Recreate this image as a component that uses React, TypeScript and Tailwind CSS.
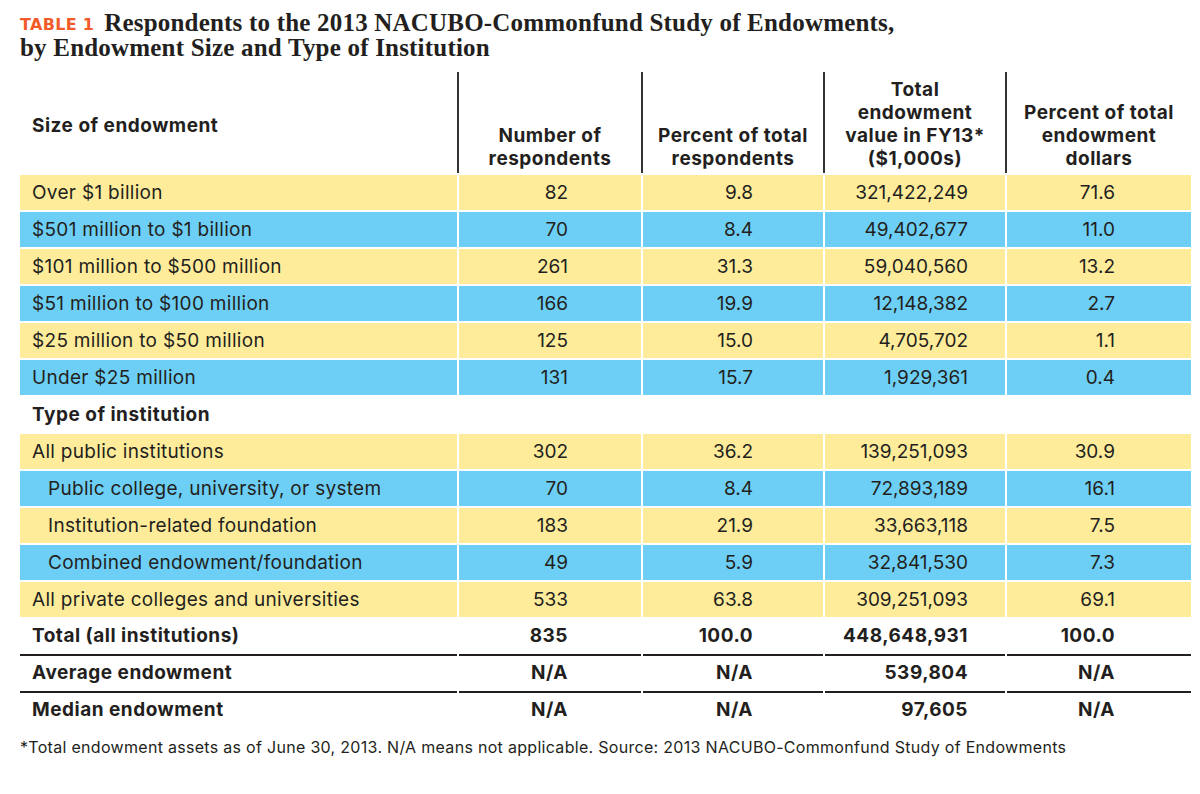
const rows = [
  { label: "Over $1 billion", n: "82", pct: "9.8", total: "321,422,249", dollars: "71.6", tone: "yellow" },
  { label: "$501 million to $1 billion", n: "70", pct: "8.4", total: "49,402,677", dollars: "11.0", tone: "blue" },
  { label: "$101 million to $500 million", n: "261", pct: "31.3", total: "59,040,560", dollars: "13.2", tone: "yellow" },
  { label: "$51 million to $100 million", n: "166", pct: "19.9", total: "12,148,382", dollars: "2.7", tone: "blue" },
  { label: "$25 million to $50 million", n: "125", pct: "15.0", total: "4,705,702", dollars: "1.1", tone: "yellow" },
  { label: "Under $25 million", n: "131", pct: "15.7", total: "1,929,361", dollars: "0.4", tone: "blue" },
];

const institutions = [
  { label: "All public institutions", n: "302", pct: "36.2", total: "139,251,093", dollars: "30.9", tone: "yellow", indent: false },
  { label: "Public college, university, or system", n: "70", pct: "8.4", total: "72,893,189", dollars: "16.1", tone: "blue", indent: true },
  { label: "Institution-related foundation", n: "183", pct: "21.9", total: "33,663,118", dollars: "7.5", tone: "yellow", indent: true },
  { label: "Combined endowment/foundation", n: "49", pct: "5.9", total: "32,841,530", dollars: "7.3", tone: "blue", indent: true },
  { label: "All private colleges and universities", n: "533", pct: "63.8", total: "309,251,093", dollars: "69.1", tone: "yellow", indent: false },
];

const summary = [
  { label: "Total (all institutions)", n: "835", pct: "100.0", total: "448,648,931", dollars: "100.0", line: true },
  { label: "Average endowment", n: "N/A", pct: "N/A", total: "539,804", dollars: "N/A", line: true },
  { label: "Median endowment", n: "N/A", pct: "N/A", total: "97,605", dollars: "N/A", line: false },
];

const grid = "grid grid-cols-[437px_182px_180px_180px_184px] gap-x-[2px]";

function DataRow({ r, indent }: { r: any; indent?: boolean }) {
  const bg = r.tone === "yellow" ? "bg-[#feec9b]" : "bg-[#6dcff6]";
  const cell = `${bg} h-[35px] flex items-center pt-[2px]`;
  return (
    <div className={`${grid} mb-[2px]`}>
      <div className={`${cell} tracking-[0.3px] ${indent ? "pl-[28px]" : "pl-3"}`}>{r.label}</div>
      <div className={`${cell} justify-end pr-[73px]`}>{r.n}</div>
      <div className={`${cell} justify-end pr-[70px]`}>{r.pct}</div>
      <div className={`${cell} justify-end pr-[37px]`}>{r.total}</div>
      <div className={`${cell} justify-end pr-[76px]`}>{r.dollars}</div>
    </div>
  );
}

export default function App() {
  return (
    <div className="w-[1200px] h-[794px] bg-white text-[#231f20] font-['Inter',sans-serif] text-[19px] px-5 pt-[11px]">
      <h1 className="font-['Liberation_Serif',serif] font-bold text-[25px] leading-[23px] tracking-[0.2px] text-[#231f20]">
        <span className="font-['DejaVu_Sans',sans-serif] font-bold text-[16px] text-[#f15a29] tracking-[0.3px] mr-[10px] align-[1px]">TABLE 1</span>
        Respondents to the 2013 NACUBO-Commonfund Study of Endowments,
        <br />
        by Endowment Size and Type of Institution
      </h1>

      <div className="mt-[13px]">
        <div className={`${grid} h-[101px] mb-[2px] font-bold leading-[23px] tracking-[0.5px]`}>
          <div className="pl-3 flex items-center pt-[6px]">Size of endowment</div>
          <div className="shadow-[-2px_0_0_#333] flex items-end justify-center text-center pb-[3px]">
            Number of<br />respondents
          </div>
          <div className="shadow-[-2px_0_0_#333] flex items-end justify-center text-center pb-[3px]">
            Percent of total<br />respondents
          </div>
          <div className="shadow-[-2px_0_0_#333] flex items-end justify-center text-center pb-[3px]">
            Total<br />endowment<br />value in FY13*<br />($1,000s)
          </div>
          <div className="shadow-[-2px_0_0_#333] flex items-end justify-center text-center pb-[3px]">
            Percent of total<br />endowment<br />dollars
          </div>
        </div>

        {rows.map((r, i) => (
          <DataRow key={i} r={r} />
        ))}

        <div className="h-[35px] mb-[2px] flex items-center pt-[2px] pl-3 font-bold tracking-[0.5px]">Type of institution</div>

        {institutions.map((r, i) => (
          <DataRow key={i} r={r} indent={r.indent} />
        ))}

        {summary.map((r, i) => {
          const cell = `flex items-center font-bold tracking-[0.5px] ${r.line ? "h-[37px] border-b-2 border-[#231f20]" : "h-[35px]"}`;
          return (
            <div key={i} className={grid}>
              <div className={`${cell} pl-3`}>{r.label}</div>
              <div className={`${cell} justify-end pr-[73px]`}>{r.n}</div>
              <div className={`${cell} justify-end pr-[70px]`}>{r.pct}</div>
              <div className={`${cell} justify-end pr-[37px]`}>{r.total}</div>
              <div className={`${cell} justify-end pr-[76px]`}>{r.dollars}</div>
            </div>
          );
        })}
      </div>

      <p className="mt-[9px] text-[16px] leading-[20px] tracking-[0.3px]">
        *Total endowment assets as of June 30, 2013. N/A means not applicable. Source: 2013 NACUBO-Commonfund Study of Endowments
      </p>
    </div>
  );
}
